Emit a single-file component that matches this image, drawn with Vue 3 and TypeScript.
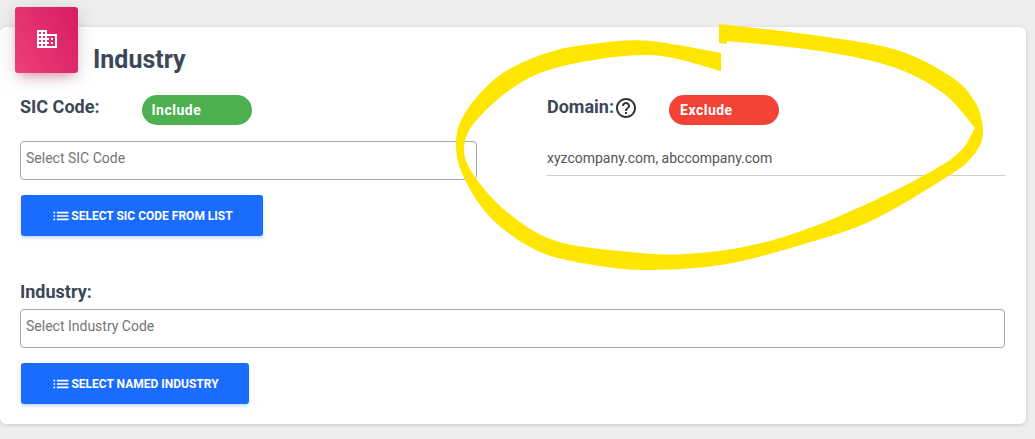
<script setup lang="ts">
type Pt = [number, number]

// catmull-rom through the traced edge of the marker stroke
function smooth(pts: Pt[]): string {
  let d = ''
  for (let i = 0; i < pts.length - 1; i++) {
    const p0 = pts[i - 1] ?? pts[i]
    const p1 = pts[i]
    const p2 = pts[i + 1]
    const p3 = pts[i + 2] ?? p2
    const c1x = p1[0] + (p2[0] - p0[0]) / 6
    const c1y = p1[1] + (p2[1] - p0[1]) / 6
    const c2x = p2[0] - (p3[0] - p1[0]) / 6
    const c2y = p2[1] - (p3[1] - p1[1]) / 6
    d += ` C${c1x.toFixed(1)} ${c1y.toFixed(1)} ${c2x.toFixed(1)} ${c2y.toFixed(1)} ${p2[0]} ${p2[1]}`
  }
  return d
}

const outer: Pt[] = [[721, 53], [650, 41], [600, 43], [550, 52], [500, 75], [465, 113], [456, 145], [465, 180], [493, 220], [540, 252], [600, 266], [653, 270], [727, 264], [807, 243], [873, 220], [950, 175], [972, 157], [982, 140], [982, 122], [975, 102], [953, 78], [897, 50], [813, 35], [719, 24]]
const innerTop: Pt[] = [[727, 41], [813, 50], [890, 66], [943, 93], [975, 128]]
const innerBottom: Pt[] = [[975, 128], [950, 160], [860, 207], [770, 241], [687, 254], [620, 251], [553, 240], [507, 212], [475, 177], [464, 150], [475, 122], [517, 85], [567, 65], [650, 55], [721, 71]]

const marker =
  `M721 53${smooth(outer)} L719 43 L727 44 L727 41` +
  `${smooth(innerTop)}${smooth(innerBottom)} Z`
</script>

<template>
  <div class="page">
    <section class="card">
      <div class="badge">
        <svg width="24" height="24" viewBox="0 0 24 24" fill="#fff">
          <path d="M12 7V3H2v18h20V7H12zM6 19H4v-2h2v2zm0-4H4v-2h2v2zm0-4H4V9h2v2zm0-4H4V5h2v2zm4 12H8v-2h2v2zm0-4H8v-2h2v2zm0-4H8V9h2v2zm0-4H8V5h2v2zm10 12h-8v-2h2v-2h-2v-2h2v-2h-2V9h8v10zm-2-8h-2v2h2v-2zm0 4h-2v2h2v-2z" />
        </svg>
      </div>
      <h2 class="title">Industry</h2>

      <div class="columns">
        <div class="col">
          <div class="label-row">
            <span class="label">SIC Code:</span>
            <span class="pill include">Include</span>
          </div>
          <div class="select">Select SIC Code</div>
          <button class="btn wide">
            <svg width="20" height="20" viewBox="0 0 24 24" fill="#fff">
              <path d="M3 13h2v-2H3v2zm0 4h2v-2H3v2zm0-8h2V7H3v2zm4 4h14v-2H7v2zm0 4h14v-2H7v2zM7 7v2h14V7H7z" />
            </svg>
            SELECT SIC CODE FROM LIST
          </button>
        </div>
        <div class="col">
          <div class="label-row">
            <span class="label">Domain:</span>
            <svg class="help" width="24" height="24" viewBox="0 0 24 24" fill="#333">
              <path d="M11 18h2v-2h-2v2zm1-16C6.48 2 2 6.48 2 12s4.48 10 10 10 10-4.48 10-10S17.52 2 12 2zm0 18c-4.41 0-8-3.59-8-8s3.59-8 8-8 8 3.59 8 8-3.59 8-8 8zm0-14c-2.21 0-4 1.79-4 4h2c0-1.1.9-2 2-2s2 .9 2 2c0 2-3 1.75-3 5h2c0-2.25 3-2.5 3-5 0-2.21-1.79-4-4-4z" />
            </svg>
            <span class="pill exclude">Exclude</span>
          </div>
          <div class="domain">xyzcompany.com, abccompany.com</div>
        </div>
      </div>

      <div class="industry">
        <div class="label">Industry:</div>
        <div class="select">Select Industry Code</div>
        <button class="btn">
          <svg width="20" height="20" viewBox="0 0 24 24" fill="#fff">
            <path d="M3 13h2v-2H3v2zm0 4h2v-2H3v2zm0-8h2V7H3v2zm4 4h14v-2H7v2zm0 4h14v-2H7v2zM7 7v2h14V7H7z" />
          </svg>
          SELECT NAMED INDUSTRY
        </button>
      </div>
    </section>

    <svg class="marker" width="1035" height="439" viewBox="0 0 1035 439">
      <path :d="marker" fill="#ffe600" />
    </svg>
  </div>
</template>

<style>
html,
body {
  background: #eeeeee;
}
</style>

<style scoped>
.page {
  position: relative;
  width: 1035px;
  height: 439px;
  padding: 27px 9px 15px 0;
  box-sizing: border-box;
  overflow: hidden;
  font-family: Roboto, "Liberation Sans", sans-serif;
  color: #3c4858;
}

.card {
  position: relative;
  height: 397px;
  box-sizing: border-box;
  padding: 0 21px 0 20px;
  background: #fff;
  border-radius: 6px;
  box-shadow: 0 1px 4px rgba(0, 0, 0, 0.16);
}

.badge {
  position: absolute;
  left: 15px;
  top: -20px;
  width: 63px;
  height: 66px;
  display: flex;
  align-items: center;
  justify-content: center;
  padding-bottom: 3px;
  box-sizing: border-box;
  border-radius: 3px;
  background: linear-gradient(60deg, #ec407a, #d81b60);
  box-shadow: 0 4px 20px rgba(0, 0, 0, 0.14), 0 7px 10px -5px rgba(233, 30, 99, 0.4);
}

.title {
  margin: 0;
  padding: 18px 0 0 73px;
  font-size: 25px;
  line-height: 29px;
  font-weight: 700;
}

.columns {
  display: grid;
  grid-template-columns: 457px 458px;
  column-gap: 70px;
  margin-top: 21px;
}

.label-row {
  display: flex;
  align-items: center;
  height: 30px;
}

.label {
  font-size: 18px;
  line-height: 20px;
  font-weight: 700;
}

.label-row .label {
  margin-top: -6px;
}

.help {
  margin: -4px 0 0 0;
}

.pill {
  box-sizing: border-box;
  width: 110px;
  height: 30px;
  padding-left: 9px;
  border-radius: 15px;
  color: #fff;
  font-size: 14px;
  line-height: 30px;
  font-weight: 700;
  letter-spacing: 0.5px;
}

.include {
  margin-left: 43px;
  background: #4caf50;
}

.exclude {
  margin-left: 31px;
  padding-left: 11px;
  background: #f44336;
}

.select {
  box-sizing: border-box;
  height: 39px;
  margin-top: 16px;
  padding: 7px 5px;
  border: 1px solid #a8a8a8;
  border-radius: 4px;
  font-size: 14px;
  line-height: 18px;
  color: #757575;
}

.domain {
  box-sizing: border-box;
  height: 35px;
  margin-top: 16px;
  padding-top: 9px;
  border-bottom: 1px solid #cfcfcf;
  font-size: 14px;
  line-height: 16px;
  color: #555;
}

.btn {
  display: flex;
  align-items: center;
  justify-content: center;
  width: 228px;
  height: 41px;
  margin: 15px 0 0 1px;
  padding: 0;
  border: 0;
  border-radius: 3px;
  background: #1a6cff;
  color: #fff;
  font-family: Roboto, sans-serif;
  font-size: 12px;
  font-weight: 700;
  box-shadow: 0 2px 3px rgba(26, 108, 255, 0.25);
}

.btn.wide {
  width: 242px;
}

.industry {
  margin-top: 46px;
}

.industry .select {
  margin-top: 7px;
}

.marker {
  position: absolute;
  left: 0;
  top: 0;
  pointer-events: none;
}
</style>
